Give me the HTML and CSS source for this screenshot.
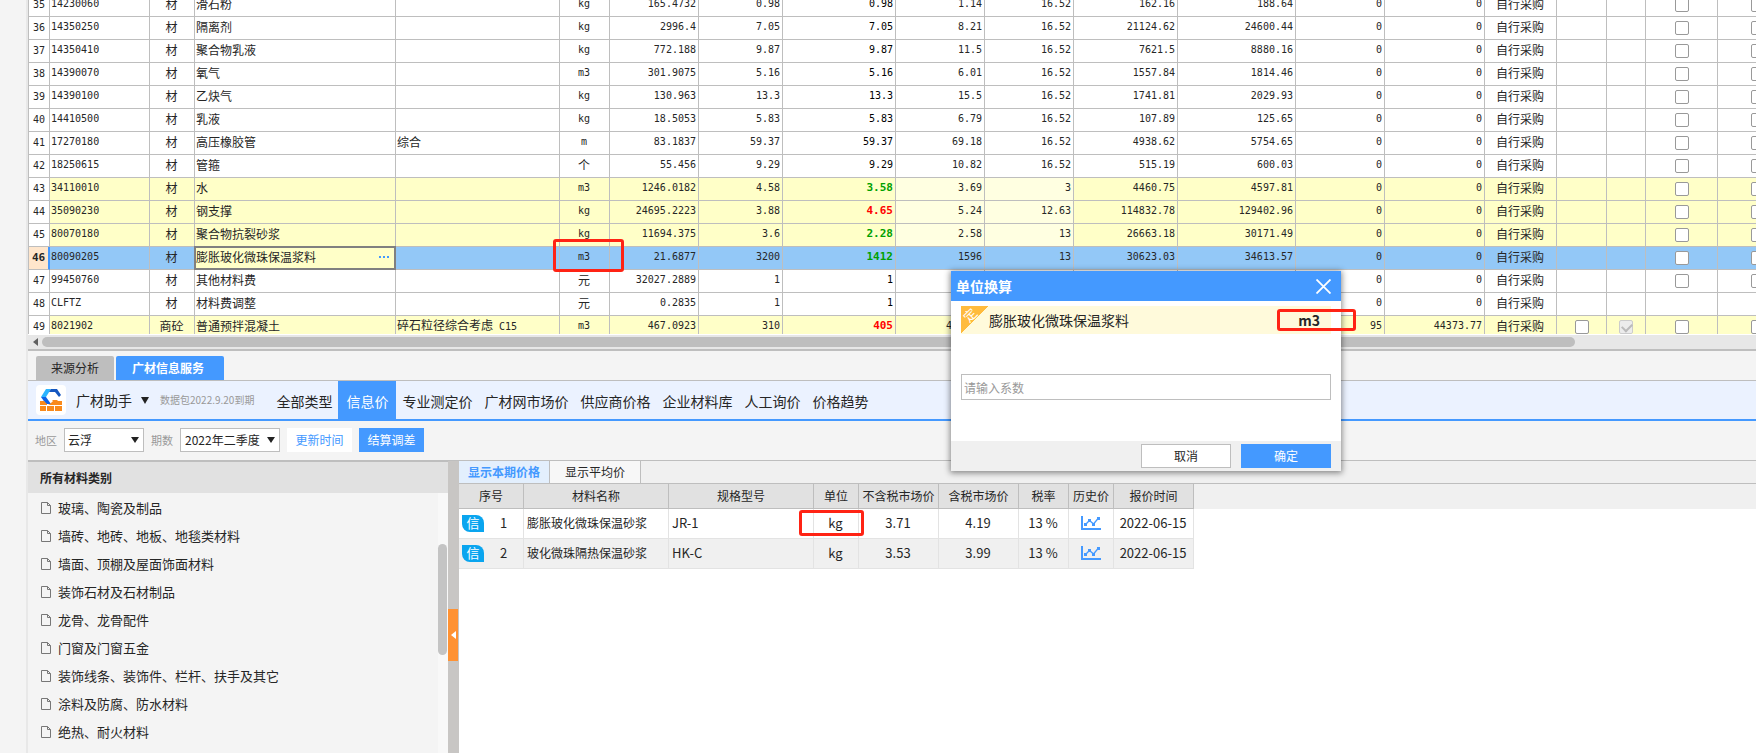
FILE: index.html
```html
<!DOCTYPE html>
<html lang="zh-CN">
<head>
<meta charset="utf-8">
<title>广材信息服务</title>
<link rel="stylesheet" href="styles.css">
</head>
<body>
<div class="gutter"></div>
<main class="main">
<section class="sheet-view">
<table class="sheet">
<colgroup><col class="w21"><col class="w100"><col class="w45"><col class="w201"><col class="w164"><col class="w50"><col class="w89"><col class="w84"><col class="w113"><col class="w89"><col class="w89"><col class="w104"><col class="w118"><col class="w89"><col class="w100"><col class="w72"><col class="w50"><col class="w39"><col class="w72"><col class="w80"></colgroup>
<tbody>
<tr><td>35<td>14230060<td>材<td>滑石粉<td><td>kg<td>165.4732<td>0.98<td>0.98<td>1.14<td>16.52<td>162.16<td>188.64<td>0<td>0<td>自行采购<td><td><td><input type="checkbox" aria-label="35 选项一"><td><input type="checkbox" aria-label="35 选项二">
<tr><td>36<td>14350250<td>材<td>隔离剂<td><td>kg<td>2996.4<td>7.05<td>7.05<td>8.21<td>16.52<td>21124.62<td>24600.44<td>0<td>0<td>自行采购<td><td><td><input type="checkbox" aria-label="36 选项一"><td><input type="checkbox" aria-label="36 选项二">
<tr><td>37<td>14350410<td>材<td>聚合物乳液<td><td>kg<td>772.188<td>9.87<td>9.87<td>11.5<td>16.52<td>7621.5<td>8880.16<td>0<td>0<td>自行采购<td><td><td><input type="checkbox" aria-label="37 选项一"><td><input type="checkbox" aria-label="37 选项二">
<tr><td>38<td>14390070<td>材<td>氧气<td><td>m3<td>301.9075<td>5.16<td>5.16<td>6.01<td>16.52<td>1557.84<td>1814.46<td>0<td>0<td>自行采购<td><td><td><input type="checkbox" aria-label="38 选项一"><td><input type="checkbox" aria-label="38 选项二">
<tr><td>39<td>14390100<td>材<td>乙炔气<td><td>kg<td>130.963<td>13.3<td>13.3<td>15.5<td>16.52<td>1741.81<td>2029.93<td>0<td>0<td>自行采购<td><td><td><input type="checkbox" aria-label="39 选项一"><td><input type="checkbox" aria-label="39 选项二">
<tr><td>40<td>14410500<td>材<td>乳液<td><td>kg<td>18.5053<td>5.83<td>5.83<td>6.79<td>16.52<td>107.89<td>125.65<td>0<td>0<td>自行采购<td><td><td><input type="checkbox" aria-label="40 选项一"><td><input type="checkbox" aria-label="40 选项二">
<tr><td>41<td>17270180<td>材<td>高压橡胶管<td>综合<td>m<td>83.1837<td>59.37<td>59.37<td>69.18<td>16.52<td>4938.62<td>5754.65<td>0<td>0<td>自行采购<td><td><td><input type="checkbox" aria-label="41 选项一"><td><input type="checkbox" aria-label="41 选项二">
<tr><td>42<td>18250615<td>材<td>管箍<td><td class="han">个<td>55.456<td>9.29<td>9.29<td>10.82<td>16.52<td>515.19<td>600.03<td>0<td>0<td>自行采购<td><td><td><input type="checkbox" aria-label="42 选项一"><td><input type="checkbox" aria-label="42 选项二">
<tr class="adjusted"><td>43<td>34110010<td>材<td>水<td><td>m3<td>1246.0182<td>4.58<td class="down">3.58<td class="pale">3.69<td class="pale">3<td>4460.75<td>4597.81<td>0<td>0<td>自行采购<td><td><td><input type="checkbox" aria-label="43 选项一"><td><input type="checkbox" aria-label="43 选项二">
<tr class="adjusted"><td>44<td>35090230<td>材<td>钢支撑<td><td>kg<td>24695.2223<td>3.88<td class="up">4.65<td class="pale">5.24<td class="pale">12.63<td>114832.78<td>129402.96<td>0<td>0<td>自行采购<td><td><td><input type="checkbox" aria-label="44 选项一"><td><input type="checkbox" aria-label="44 选项二">
<tr class="adjusted"><td>45<td>80070180<td>材<td>聚合物抗裂砂浆<td><td>kg<td>11694.375<td>3.6<td class="down">2.28<td class="pale">2.58<td class="pale">13<td>26663.18<td>30171.49<td>0<td>0<td>自行采购<td><td><td><input type="checkbox" aria-label="45 选项一"><td><input type="checkbox" aria-label="45 选项二">
<tr class="selected"><td>46<td>80090205<td>材<td class="editing"><div class="edit-box">膨胀玻化微珠保温浆料<button class="more" aria-label="更多"><svg width="10" height="2" viewBox="0 0 10 2"><path d="M0 0h2v2H0zM4 0h2v2H4zM8 0h2v2H8z" fill="#4499ff"/></svg></button></div><td><td class="marked">m3<i class="mark mark-sheet"></i><td>21.6877<td>3200<td class="down">1412<td>1596<td>13<td>30623.03<td>34613.57<td>0<td>0<td>自行采购<td><td><td><input type="checkbox" aria-label="46 选项一"><td><input type="checkbox" aria-label="46 选项二">
<tr><td>47<td>99450760<td>材<td>其他材料费<td><td class="han">元<td>32027.2889<td>1<td>1<td><td><td><td><td>0<td>0<td>自行采购<td><td><td><input type="checkbox" aria-label="47 选项一"><td><input type="checkbox" aria-label="47 选项二">
<tr><td>48<td>CLFTZ<td>材<td>材料费调整<td><td class="han">元<td>0.2835<td>1<td>1<td><td><td><td><td>0<td>0<td>自行采购<td><td><td><td>
<tr class="adjusted"><td>49<td>8021902<td>商砼<td>普通预拌混凝土<td>碎石粒径综合考虑<span class="latin">&nbsp;C15</span><td>m3<td>467.0923<td>310<td class="up">405<td>417.15<td><td><td><td>95<td>44373.77<td>自行采购<td><input type="checkbox" aria-label="49 选项三"><td><input type="checkbox" aria-label="49 选项四" checked disabled><td><input type="checkbox" aria-label="49 选项一"><td><input type="checkbox" aria-label="49 选项二">
</tbody>
</table>
</section>
<div class="hscroll"><svg width="5" height="8" viewBox="0 0 5 8"><path d="M5 0v8L0 4z" fill="#606060"/></svg><div class="hthumb"></div></div>

<div class="tabs"><button class="tab">来源分析</button><button class="tab tab-on">广材信息服务</button></div>

<header class="bar">
<span class="logo"><svg width="24" height="24" viewBox="0 0 24 24"><path d="M7 1h5L7 9H2z" fill="#2bb4ff"/><path d="M2 9h5l5 7H7z" fill="#0f62e6"/><path d="M12 1h6l4 6-2 2-4-5h-6z" fill="#1557c0"/><path d="M1 13h4l3 3v1H1zM9 17l2-1 3-3h9v4zM13 12h6l-3 3zM1 18h6v5H1zM8 18h7v5H8zM16 18h7v5h-7z" fill="#f98a1c"/></svg></span>
<button class="brand">广材助手<svg width="8" height="7" viewBox="0 0 8 7"><path d="M0 0h8L4 7z" fill="#222"/></svg></button>
<span class="expiry">数据包2022.9.20到期</span>
<nav class="nav"><a href="#">全部类型</a><a href="#" class="on">信息价</a><a href="#">专业测定价</a><a href="#">广材网市场价</a><a href="#">供应商价格</a><a href="#">企业材料库</a><a href="#">人工询价</a><a href="#">价格趋势</a></nav>
</header>

<form class="filters">
<label for="area">地区</label>
<span class="pick pick-area"><select id="area"><option>云浮</option></select><svg width="8" height="6" viewBox="0 0 8 6"><path d="M0 0h8L4 6z" fill="#222"/></svg></span>
<label for="period">期数</label>
<span class="pick pick-period"><select id="period"><option>2022年二季度</option></select><svg width="8" height="6" viewBox="0 0 8 6"><path d="M0 0h8L4 6z" fill="#222"/></svg></span>
<button type="button" class="btn btn-plain">更新时间</button>
<button type="button" class="btn btn-blue">结算调差</button>
</form>

<div class="panes">
<aside class="cats">
<h2>所有材料类别</h2>
<div class="cats-body">
<ul>
<li><svg class="file" width="10" height="12" viewBox="0 0 10 12"><path d="M.5.5h6l3 3v8h-9zM6.500.5v3h3" fill="none" stroke="#777"/></svg>玻璃、陶瓷及制品</li>
<li><svg class="file" width="10" height="12" viewBox="0 0 10 12"><path d="M.5.5h6l3 3v8h-9zM6.500.5v3h3" fill="none" stroke="#777"/></svg>墙砖、地砖、地板、地毯类材料</li>
<li><svg class="file" width="10" height="12" viewBox="0 0 10 12"><path d="M.5.5h6l3 3v8h-9zM6.500.5v3h3" fill="none" stroke="#777"/></svg>墙面、顶棚及屋面饰面材料</li>
<li><svg class="file" width="10" height="12" viewBox="0 0 10 12"><path d="M.5.5h6l3 3v8h-9zM6.500.5v3h3" fill="none" stroke="#777"/></svg>装饰石材及石材制品</li>
<li><svg class="file" width="10" height="12" viewBox="0 0 10 12"><path d="M.5.5h6l3 3v8h-9zM6.500.5v3h3" fill="none" stroke="#777"/></svg>龙骨、龙骨配件</li>
<li><svg class="file" width="10" height="12" viewBox="0 0 10 12"><path d="M.5.5h6l3 3v8h-9zM6.500.5v3h3" fill="none" stroke="#777"/></svg>门窗及门窗五金</li>
<li><svg class="file" width="10" height="12" viewBox="0 0 10 12"><path d="M.5.5h6l3 3v8h-9zM6.500.5v3h3" fill="none" stroke="#777"/></svg>装饰线条、装饰件、栏杆、扶手及其它</li>
<li><svg class="file" width="10" height="12" viewBox="0 0 10 12"><path d="M.5.5h6l3 3v8h-9zM6.500.5v3h3" fill="none" stroke="#777"/></svg>涂料及防腐、防水材料</li>
<li><svg class="file" width="10" height="12" viewBox="0 0 10 12"><path d="M.5.5h6l3 3v8h-9zM6.500.5v3h3" fill="none" stroke="#777"/></svg>绝热、耐火材料</li>
</ul>
<div class="vscroll"><div class="vthumb"></div></div>
</div>
</aside>
<div class="divider"><button class="fold" aria-label="收起"><svg width="5" height="8" viewBox="0 0 5 8"><path d="M5 0v8L0 4z" fill="#fff"/></svg></button></div>
<section class="prices">
<div class="ptabs"><button class="ptab ptab-on">显示本期价格</button><button class="ptab">显示平均价</button></div>
<div class="phead-band">
<table class="ptable">
<colgroup><col class="w65"><col class="w145"><col class="w145"><col class="w45"><col class="w80"><col class="w80"><col class="w50"><col class="w45"><col class="w80"></colgroup>
<thead><tr><th>序号</th><th>材料名称</th><th>规格型号</th><th>单位</th><th>不含税市场价</th><th>含税市场价</th><th>税率</th><th>历史价</th><th>报价时间</th></tr></thead>
<tbody>
<tr><td><div class="seq"><span class="badge">信</span>1</div></td><td class="pname">膨胀玻化微珠保温砂浆</td><td class="spec">JR-1</td><td class="marked">kg<i class="mark mark-price"></i></td><td>3.71</td><td>4.19</td><td>13 %</td><td><svg width="20" height="15" viewBox="0 0 20 15" fill="none" stroke="#4499ff"><path d="M1 0v13h19" stroke-width="2"/><path d="M4.500 8.500l4-4 4 3.500 5-6" stroke-width="1.300"/><path d="M3 7h3v3H3zM7 3h3v3H7zM11 7h3v3h-3zM16 1h3v3h-3z" fill="#4499ff" stroke="none"/></svg></td><td>2022-06-15</td></tr>
<tr><td><div class="seq"><span class="badge">信</span>2</div></td><td class="pname">玻化微珠隔热保温砂浆</td><td class="spec">HK-C</td><td>kg</td><td>3.53</td><td>3.99</td><td>13 %</td><td><svg width="20" height="15" viewBox="0 0 20 15" fill="none" stroke="#4499ff"><path d="M1 0v13h19" stroke-width="2"/><path d="M4.500 8.500l4-4 4 3.500 5-6" stroke-width="1.300"/><path d="M3 7h3v3H3zM7 3h3v3H7zM11 7h3v3h-3zM16 1h3v3h-3z" fill="#4499ff" stroke="none"/></svg></td><td>2022-06-15</td></tr>
</tbody>
</table>
</div>
</section>
</div>
</main>

<div class="dialog" role="dialog" aria-labelledby="dlg-title">
<div class="dlg-title"><h3 id="dlg-title">单位换算</h3><button class="close" aria-label="关闭"><svg width="15" height="15" viewBox="0 0 15 15"><path d="M.5.5l14 14M14.500.5l-14 14" stroke="#fff" stroke-width="1.800"/></svg></button></div>
<div class="dlg-body">
<div class="item"><span class="ribbon"><b>定</b></span><label class="item-name" for="factor">膨胀玻化微珠保温浆料</label><strong class="item-unit">m3<i class="mark mark-dialog"></i></strong></div>
<input id="factor" class="factor" type="text" placeholder="请输入系数">
</div>
<div class="dlg-foot"><button class="dbtn">取消</button><button class="dbtn dbtn-ok">确定</button></div>
</div>
</body>
</html>
```
FILE: styles.css
```css
* { box-sizing: border-box; }
body {
  margin: 0;
  height: 100vh;
  display: flex;
  overflow: hidden;
  position: relative;
  background: #f4f4f4;
  color: #262626;
  font: 12px/16px "Noto Sans CJK SC", "Noto Sans", sans-serif;
}
button { font: inherit; color: inherit; border: 0; padding: 0; margin: 0; background: none; }
svg { display: block; flex: none; }
.gutter { width: 28px; flex: none; border-right: 2px solid #e8e8e8; }
.main { flex: 1; min-width: 0; display: flex; flex-direction: column; }

/* material sheet */
.sheet-view { height: 334px; flex: none; overflow: hidden; background: #fff; border-left: 1px solid #bebebe; }
.sheet { table-layout: fixed; width: 1769px; border-collapse: separate; border-spacing: 0; margin-top: -6px; }
.w21 { width: 21px; } .w39 { width: 39px; } .w45 { width: 45px; } .w50 { width: 50px; } .w65 { width: 65px; }
.w72 { width: 72px; } .w80 { width: 80px; } .w84 { width: 84px; } .w89 { width: 89px; } .w100 { width: 100px; }
.w104 { width: 104px; } .w113 { width: 113px; } .w118 { width: 118px; } .w145 { width: 145px; }
.w164 { width: 164px; } .w201 { width: 201px; }
.sheet td {
  height: 23px;
  padding: 0 2px 2px 1px;
  border-right: 1px solid #bebebe;
  border-bottom: 1px solid #bebebe;
  text-align: right;
  white-space: nowrap;
  font: 10px/16px "DejaVu Sans Mono", monospace;
}
.sheet td:nth-child(1) { text-align: center; background: #fff; padding: 0; }
.sheet td:nth-child(2) { text-align: left; }
.sheet td:nth-child(3), .sheet td:nth-child(16) { text-align: center; font: 12px/16px "Noto Sans CJK SC", sans-serif; }
.sheet td:nth-child(4), .sheet td:nth-child(5) { text-align: left; font: 12px/16px "Noto Sans CJK SC", sans-serif; }
.sheet td:nth-child(6) { text-align: center; }
.sheet td:nth-child(9) { color: #000; }
.sheet td:nth-child(n+17) { text-align: center; padding: 0; }
.sheet td.han { font: 12px/16px "Noto Sans CJK SC", sans-serif; }
.latin { font: 10px/16px "DejaVu Sans Mono", monospace; }
.adjusted td { background: #ffffc8; }
.adjusted td.pale { background: #ffffe1; }
.selected td { background: #93c8f7; }
.sheet td.down { color: #00a000; font-weight: bold; font-size: 11px; }
.sheet td.up { color: #ff0000; font-weight: bold; font-size: 11px; }
.sheet .selected td:nth-child(1) { background: #ffe6cc; font-weight: bold; font-size: 11px; border-right: 2px solid #4499ff; }
.sheet td.editing { padding: 0; position: relative; }
.edit-box {
  position: absolute;
  inset: -1px;
  display: flex;
  align-items: center;
  justify-content: space-between;
  padding: 0 3px 2px 0;
  border: 2px solid #808080;
  background: #ffffc8;
}
.more { padding: 2px; }
.sheet input {
  appearance: none;
  display: block;
  width: 14px;
  height: 14px;
  margin: 0 auto;
  border: 1px solid #999;
  border-radius: 2px;
  background: #fff;
}
.sheet input:disabled { border-color: #ccc; background: #ececec; position: relative; }
.sheet input:checked::after {
  content: "";
  position: absolute;
  left: 2px;
  top: 2px;
  width: 8px;
  height: 5px;
  border: solid #bbb;
  border-width: 0 0 2px 2px;
  transform: rotate(-45deg);
}
.marked { position: relative; }
.mark { position: absolute; border: 3px solid #ff2314; border-radius: 3px; z-index: 2; pointer-events: none; }
.mark-sheet { inset: -8px -15px -3px -7px; }
.mark-price { inset: 1px -6px 2px -15px; }
.mark-dialog { inset: -3px -36px -3px -21px; }

.hscroll {
  height: 17px;
  flex: none;
  display: flex;
  align-items: center;
  gap: 4px;
  padding-left: 5px;
  background: #e7e7e7;
  border-top: 1px solid #fff;
  border-bottom: 2px solid #bebebe;
}
.hthumb { width: 89%; height: 10px; border-radius: 5px; background: #bebebe; }

/* lower tabs */
.tabs { flex: none; display: flex; gap: 2px; padding: 5px 8px 0; border-bottom: 1px solid #bebebe; }
.tab { height: 24px; padding: 0 15px; border-radius: 2px 2px 0 0; background: #bebebe; }
.tab-on { padding: 0 20px 0 16px; background: #4499ff; color: #fff; font-weight: bold; }

.bar {
  flex: none;
  display: flex;
  align-items: center;
  height: 40px;
  padding-left: 8px;
  background: #ebf2ff;
  border-bottom: 2px solid #4499ff;
}
.logo { width: 30px; height: 30px; padding: 3px; border-radius: 4px; background: #fff; }
.brand { display: flex; align-items: center; gap: 9px; margin: 0 11px 0 10px; font-size: 14px; line-height: 20px; }
.expiry { color: #999; font-size: 10px; }
.nav { display: flex; align-self: stretch; margin-left: 16px; }
.nav a { display: flex; align-items: center; padding: 2px 6px 0; font-size: 14px; color: #262626; text-decoration: none; white-space: nowrap; }
.nav .on { padding: 2px 8px 0; background: #4499ff; color: #fff; }

.filters {
  flex: none;
  display: flex;
  align-items: center;
  height: 39px;
  padding: 0 7px 1px;
}
.filters label { color: #999; font-size: 11px; margin-right: 7px; }
.pick { position: relative; margin-right: 7px; }
.pick select {
  appearance: none;
  width: 100%;
  height: 24px;
  padding: 0 3px;
  border: 1px solid #bebebe;
  border-radius: 0;
  background: #fff;
  color: #262626;
  font: inherit;
}
.pick svg { position: absolute; right: 5px; top: 9px; }
.pick-area { width: 80px; }
.pick-period { width: 100px; }
.pick-period select { padding: 0 4px; }
.btn { height: 24px; width: 65px; margin-right: 7px; }
.btn-plain { background: #fff; color: #4499ff; }
.btn-blue { background: #4499ff; color: #fff; }

/* category list */
.panes { flex: 1; min-height: 0; display: flex; border-top: 1px solid #bebebe; }
.cats { width: 420px; flex: none; display: flex; flex-direction: column; border-top: 1px solid #bebebe; }
.cats h2 { margin: 0; padding: 8px 12px 7px; font-size: 12px; line-height: 16px; background: #e1e1e1; }
.cats-body { flex: 1; min-height: 0; display: flex; justify-content: space-between; }
.cats ul { list-style: none; margin: 0; padding: 1px 0 0 13px; }
.cats li { display: flex; align-items: center; gap: 7px; height: 28px; font-size: 13px; }
.vscroll { width: 10px; padding-top: 51px; background: #f8f8f8; }
.vthumb { width: 9px; height: 111px; border-radius: 5px; background: #c4c4c4; }
.divider { width: 11px; flex: none; display: flex; flex-direction: column; justify-content: center; padding-top: 56px; background: #c8c6c4; }
.fold { width: 10px; height: 52px; padding-left: 3px; background: #ff9233; }

/* price table */
.prices { flex: 1; min-width: 0; background: #fff; }
.ptabs { display: flex; height: 23px; background: #f0f0f0; border-bottom: 1px solid #bebebe; }
.ptab { width: 91px; border-right: 1px solid #bebebe; background: #f7f7f7; }
.ptab-on { background: #e3effd; color: #4499ff; font-weight: bold; }
.phead-band { background: linear-gradient(#f0f0f0, #f0f0f0) 0 0 / 100% 25px no-repeat; }
.ptable { table-layout: fixed; width: 735px; border-collapse: separate; border-spacing: 0; }
.ptable th { height: 25px; padding: 0; font-weight: normal; white-space: nowrap; background: #e1e1e1; border-right: 1px solid #bebebe; border-bottom: 1px solid #bebebe; }
.ptable td { height: 30px; padding: 0 1px 1px 0; text-align: center; font-size: 13px; border-right: 1px solid #e3e3e3; border-bottom: 1px solid #e3e3e3; }
.ptable tr:nth-child(2) td { background: #f0f0f0; }
.ptable svg { margin: 0 auto; }
.ptable .pname { font-size: 12px; text-align: left; padding-left: 3px; }
.ptable .spec { text-align: left; padding-left: 3px; }
.seq { display: flex; align-items: center; gap: 16px; padding-left: 3px; }
.badge { width: 22px; height: 17px; line-height: 16px; border-radius: 0 8px 0 8px; background: #0aa5ef; color: #fff; font-size: 13px; }

/* unit conversion dialog */
.dialog {
  position: absolute;
  left: 951px;
  top: 271px;
  width: 390px;
  background: #fff;
  box-shadow: 0 1px 6px 1px rgba(0, 0, 0, .45);
}
.dlg-title { display: flex; align-items: center; justify-content: space-between; height: 30px; padding: 0 10px 0 5px; background: #4499ff; color: #fff; }
.dlg-title h3 { margin: 0; font-size: 14px; line-height: 20px; }
.dlg-body { padding: 5px 10px 41px; }
.item { display: flex; align-items: center; height: 28px; background: #fffadb; }
.ribbon { width: 28px; height: 28px; background: linear-gradient(135deg, #ffbb3d 50%, transparent 50%); color: #fff; }
.ribbon b { display: block; width: 18px; font-size: 13px; line-height: 18px; font-weight: normal; text-align: center; transform: rotate(-45deg); }
.item-name { flex: 1; font-size: 14px; }
.item-unit { position: relative; margin-right: 11px; font-size: 14px; }
.factor { display: block; width: 100%; height: 26px; margin-top: 40px; padding: 0 2px; border: 1px solid #bebebe; background: #fff; font: inherit; }
.factor::placeholder { color: #999; }
.dlg-foot { display: flex; justify-content: flex-end; gap: 10px; padding: 3px 10px; background: #f0f0f0; }
.dbtn { width: 90px; height: 24px; border: 1px solid #bebebe; background: #fff; }
.dbtn-ok { border-color: #4499ff; background: #4499ff; color: #fff; }
```
